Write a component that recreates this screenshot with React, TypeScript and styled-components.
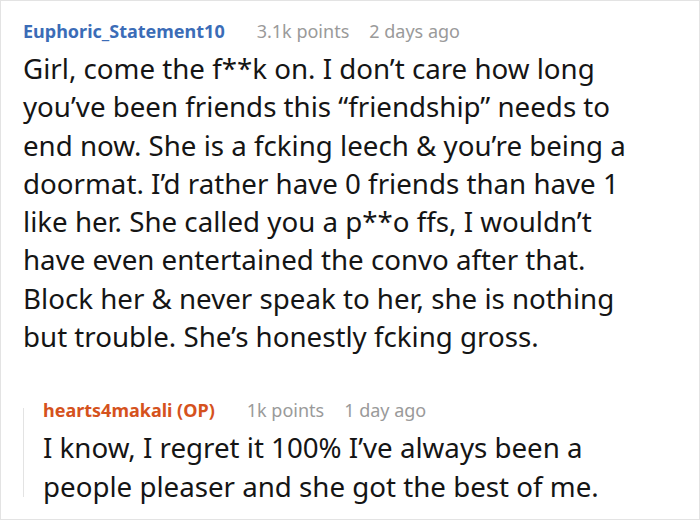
import React from 'react';
import styled, { createGlobalStyle } from 'styled-components';

const GlobalStyle = createGlobalStyle`
  html, body {
    margin: 0;
    padding: 0;
    background: #ffffff;
  }
  body {
    font-family: 'Noto Sans', 'Open Sans', sans-serif;
  }
`;

interface CommentData {
  author: string;
  isOp?: boolean;
  points: string;
  age: string;
  text: string;
}

const parent: CommentData = {
  author: 'Euphoric_Statement10',
  points: '3.1k points',
  age: '2 days ago',
  text:
    'Girl, come the f**k on. I don\u2019t care how long you\u2019ve been friends this \u201cfriendship\u201d needs to end now. She is a fcking leech & you\u2019re being a doormat. I\u2019d rather have 0 friends than have 1 like her. She called you a p**o ffs, I wouldn\u2019t have even entertained the convo after that. Block her & never speak to her, she is nothing but trouble. She\u2019s honestly fcking gross.',
};

const reply: CommentData = {
  author: 'hearts4makali (OP)',
  isOp: true,
  points: '1k points',
  age: '1 day ago',
  text: 'I know, I regret it 100% I\u2019ve always been a people pleaser and she got the best of me.',
};

const CommentHeader: React.FC<{ comment: CommentData }> = ({ comment }) => (
  <Header>
    <Author isOp={comment.isOp}>{comment.author}</Author>
    <Meta>{comment.points}</Meta>
    <Meta>{comment.age}</Meta>
  </Header>
);

const App: React.FC = () => {
  return (
    <>
      <GlobalStyle />
      <Frame>
        <CommentHeader comment={parent} />
        <Body>{parent.text}</Body>
        <Reply>
          <CommentHeader comment={reply} />
          <Body>{reply.text}</Body>
        </Reply>
      </Frame>
    </>
  );
};

const Frame = styled.div`
  box-sizing: border-box;
  width: 700px;
  height: 520px;
  border: 1px solid #e3e3e3;
  padding: 17px 42px 0 22px;
  overflow: hidden;
  background: #fff;
`;

const Header = styled.div`
  display: flex;
  align-items: baseline;
  gap: 20px;
  height: 26px;
  line-height: 26px;
  margin-bottom: 5px;
`;

const Author = styled.span<{ isOp?: boolean }>`
  font-size: 18px;
  font-weight: 700;
  color: ${props => (props.isOp ? '#d5521d' : '#3b6cb7')};
  margin-right: 12px;
`;

const Meta = styled.span`
  font-size: 18px;
  color: #9a9a9a;
`;

const Body = styled.p`
  margin: 0;
  font-size: 27.7px;
  line-height: 38.3px;
  color: #151515;
`;

const Reply = styled.div`
  position: relative;
  margin-top: 42px;
  padding-left: 20px;

  &::before {
    content: '';
    position: absolute;
    left: 0;
    top: 11px;
    bottom: 8px;
    width: 1px;
    background: #e3e3e3;
  }
`;

export default App;
